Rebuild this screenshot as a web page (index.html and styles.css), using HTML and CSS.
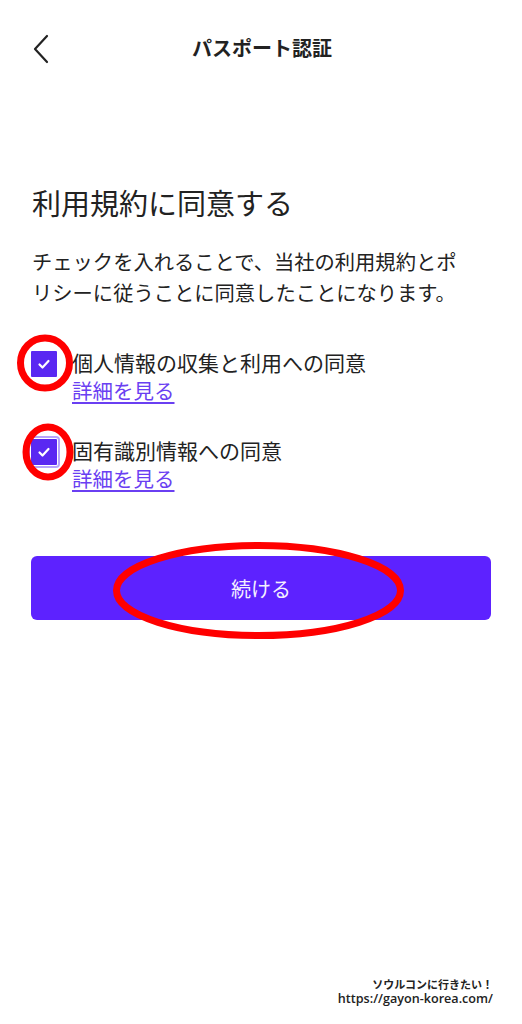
FILE: index.html
```html
<!DOCTYPE html>
<html lang="ja">
  <head>
    <meta charset="UTF-8" />
    <meta name="viewport" content="width=device-width, initial-scale=1.0" />
    <title>パスポート認証</title>
    <link rel="stylesheet" href="styles.css">
  </head>
  <body>
    <div class="page">
      <header class="top-bar">
        <span class="back">
          <svg width="16" height="30" viewBox="0 0 16 30"><path d="M14 2 L2 15 L14 28" fill="none" stroke="#222" stroke-width="2.2" stroke-linecap="round" stroke-linejoin="round"/></svg>
        </span>
        <h1 class="title">パスポート認証</h1>
      </header>

      <main class="content">
        <h2 class="heading">利用規約に同意する</h2>
        <p class="lead">チェックを入れることで、当社の利用規約とポリシーに従うことに同意したことになります。</p>

        <div class="agree-item">
          <span class="check">
            <svg width="26" height="26" viewBox="0 0 26 26"><path d="M8.5 13.5 L11.5 16.5 L17.5 10" fill="none" stroke="#fff" stroke-width="2.2" stroke-linecap="round" stroke-linejoin="round"/></svg>
          </span>
          <div class="agree-text">
            <div class="agree-label">個人情報の収集と利用への同意</div>
            <a class="detail" href="#">詳細を見る</a>
          </div>
        </div>

        <div class="agree-item">
          <span class="check focused">
            <svg width="26" height="26" viewBox="0 0 26 26"><path d="M8.5 13.5 L11.5 16.5 L17.5 10" fill="none" stroke="#fff" stroke-width="2.2" stroke-linecap="round" stroke-linejoin="round"/></svg>
          </span>
          <div class="agree-text">
            <div class="agree-label">固有識別情報への同意</div>
            <a class="detail" href="#">詳細を見る</a>
          </div>
        </div>

        <button class="continue">続ける</button>
      </main>

      <footer class="credit">
        <div class="credit-jp">ソウルコンに行きたい！</div>
        <div class="credit-url">https://gayon-korea.com/</div>
      </footer>

      <svg class="marks" width="522" height="1024" viewBox="0 0 522 1024">
        <ellipse cx="45" cy="363" rx="24.5" ry="25" fill="none" stroke="#ff0000" stroke-width="7"/>
        <ellipse cx="48" cy="452" rx="22" ry="25" fill="none" stroke="#ff0000" stroke-width="7"/>
        <ellipse cx="258.5" cy="590.5" rx="142" ry="45" fill="none" stroke="#ff0000" stroke-width="7"/>
      </svg>
    </div>
  </body>
</html>
```

FILE: styles.css
```css
body {
  margin: 0;
  background: #fff;
  color: #222;
  font-family: "Noto Sans CJK JP", "Noto Sans", sans-serif;
}
.page {
  position: relative;
  width: 522px;
  height: 1024px;
  display: flex;
  flex-direction: column;
  overflow: hidden;
}
.top-bar {
  height: 96px;
  display: flex;
  align-items: center;
  justify-content: center;
  position: relative;
}
.back {
  position: absolute;
  left: 33px;
  top: 34px;
  display: block;
  line-height: 0;
}
.title {
  margin: 0;
  font-size: 20px;
  font-weight: 700;
  line-height: 28px;
  margin-left: 2px;
}
.content {
  padding: 0 32px 0 31px;
}
.heading {
  margin: 86px 0 0 1px;
  font-size: 29px;
  font-weight: 400;
  line-height: 40px;
}
.lead {
  margin: 24px 0 0 1px;
  max-width: 436px;
  font-size: 20.3px;
  line-height: 31px;
}
.agree-item {
  display: flex;
  gap: 15px;
  margin-top: 40px;
}
.agree-item + .agree-item {
  margin-top: 32px;
}
.check {
  width: 26px;
  height: 26px;
  flex: none;
  margin-top: 3px;
  background: #5a28f2;
  border-radius: 1px;
  line-height: 0;
}
.check.focused {
  outline: 2px solid #b8a4fb;
  outline-offset: 1px;
}
.agree-text {
  font-size: 21px;
  line-height: 28px;
}
.detail {
  font-size: 20.5px;
  color: #6a3ff2;
  text-decoration: underline;
  text-underline-offset: 3px;
}
.continue {
  display: block;
  width: 460px;
  height: 64px;
  margin-top: 64px;
  border: 0;
  border-radius: 6px;
  background: #5d22ff;
  color: #f4efff;
  font-family: inherit;
  font-size: 20px;
  padding: 0;
}
.credit {
  margin-top: auto;
  padding: 0 29px 17px 0;
  text-align: right;
  color: #222;
  font-weight: 700;
}
.credit-jp {
  font-size: 11px;
  line-height: 14px;
}
.credit-url {
  font-family: "Open Sans", "Noto Sans", sans-serif;
  font-size: 12.6px;
  font-weight: 600;
  line-height: 16px;
}
.marks {
  position: absolute;
  left: 0;
  top: 0;
  pointer-events: none;
}
```
